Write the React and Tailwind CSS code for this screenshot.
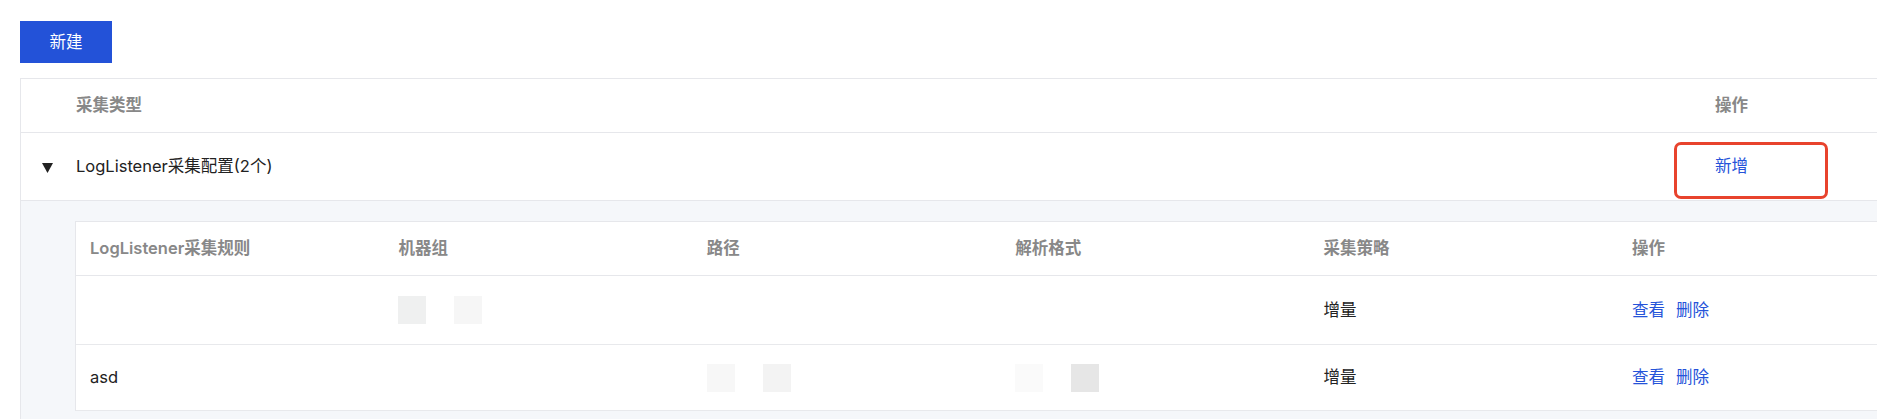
import React from "react";

const columns = ["LogListener采集规则", "机器组", "路径", "解析格式", "采集策略", "操作"];

const rules = [
  { name: "", strategy: "增量", blocks: [null, ["bg-[#eff0f0]", "bg-[#f6f6f6]"], null, null] },
  { name: "asd", strategy: "增量", blocks: [null, null, ["bg-[#f7f7f7]", "bg-[#f3f3f3]"], ["bg-[#fafafa]", "bg-[#e6e6e6]"]] },
];

const Cell = ({ children, className = "" }) => (
  <div className={`w-[308.4px] shrink-0 pl-[14px] flex items-center ${className}`}>{children}</div>
);

const Blocks = ({ list }) =>
  list ? (
    <div className="flex gap-[28px]">
      {list.map((c, i) => (
        <span key={i} className={`inline-block w-[28px] h-[28px] ${c}`} />
      ))}
    </div>
  ) : null;

export default function App() {
  return (
    <div
      className="w-[1877px] h-[419px] overflow-hidden bg-white pt-[21px] pl-[20px] text-[16.5px] text-[#222]"
      style={{ fontFamily: 'Inter, "Noto Sans CJK SC", sans-serif' }}
    >
      <button className="w-[92px] h-[42px] bg-[#2352d8] text-white text-[16.5px]">新建</button>

      <div className="mt-[15px] w-[1950px] border-t border-l border-[#e6e7eb]">
        {/* header */}
        <div className="flex h-[54px] border-b border-[#e6e7eb] text-[#888] font-semibold">
          <div className="w-[40px] shrink-0" />
          <div className="w-[1639px] shrink-0 pl-[15px] flex items-center">采集类型</div>
          <div className="flex-1 pl-[15px] flex items-center">操作</div>
        </div>

        {/* group row */}
        <div className="flex h-[68px] border-b border-[#e6e7eb]">
          <div className="w-[40px] shrink-0 flex items-center pl-[21px] pt-[2px]">
            <svg width="11" height="10" viewBox="0 0 11 10">
              <polygon points="0,0 11,0 5.5,10" fill="#222" />
            </svg>
          </div>
          <div className="w-[1639px] shrink-0 pl-[15px] flex items-center">LogListener采集配置(2个)</div>
          <div className="flex-1 pl-[15px] flex items-center relative">
            <span className="text-[#2553d9] cursor-pointer">新增</span>
            <div className="absolute left-[-26px] top-[9px] w-[154px] h-[57px] border-[3px] border-[#e8432d] rounded-[7px]" />
          </div>
        </div>

        {/* expanded */}
        <div className="bg-[#f5f7fa] pt-[20px] pl-[54px] pb-[20px]">
          <div className="w-[1900px] bg-white border-t border-l border-[#e6e7eb]">
            <div className="flex h-[54px] border-b border-[#e6e7eb] text-[#888] font-semibold">
              {columns.map((c) => (
                <Cell key={c}>{c}</Cell>
              ))}
            </div>
            {rules.map((r, idx) => (
              <div
                key={idx}
                className={`flex border-b border-[#e8e9ec] ${idx === 0 ? "h-[69px]" : "h-[66px]"}`}
              >
                <Cell>{r.name}</Cell>
                <Cell><Blocks list={r.blocks[1]} /></Cell>
                <Cell><Blocks list={r.blocks[2]} /></Cell>
                <Cell><Blocks list={r.blocks[3]} /></Cell>
                <Cell>{r.strategy}</Cell>
                <Cell className="gap-[11px] text-[#2553d9]">
                  <span className="cursor-pointer">查看</span>
                  <span className="cursor-pointer">删除</span>
                </Cell>
              </div>
            ))}
          </div>
        </div>
      </div>
    </div>
  );
}
